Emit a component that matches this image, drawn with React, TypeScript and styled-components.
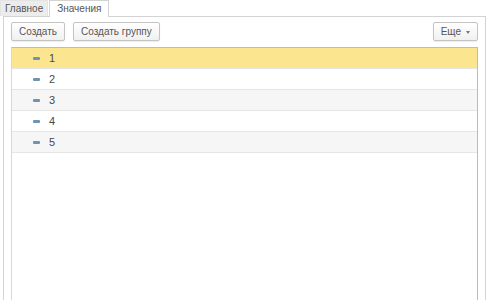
import styled, { createGlobalStyle } from 'styled-components'

const GlobalStyle = createGlobalStyle`
   html, body {
      margin: 0;
      padding: 0;
      background: #fff;
      font-family: 'Liberation Sans', Arial, sans-serif;
      font-size: 10px;
      color: #555;
   }
`

const Page = styled.div`
   width: 500px;
   height: 300px;
   display: flex;
   flex-direction: column;
   overflow: hidden;
`

const Tabs = styled.div`
   display: flex;
   height: 16px;
`

const Tab = styled.div<{ $active?: boolean }>`
   height: ${(p) => (p.$active ? '17px' : '16px')};
   padding: 0 ${(p) => (p.$active ? '7px' : '4px')};
   line-height: 16px;
   box-sizing: border-box;
   background: ${(p) => (p.$active ? '#fff' : '#ececec')};
   border: 1px solid ${(p) => (p.$active ? '#d3d3d3' : '#e4e4e4')};
   border-bottom: none;
   margin-left: ${(p) => (p.$active ? '1px' : '0')};
   position: relative;
   z-index: ${(p) => (p.$active ? 1 : 0)};
   color: #555;
`

const Panel = styled.div`
   flex: 1;
   margin: 0 14px 0 3px;
   border: 1px solid #d3d3d3;
   border-bottom: none;
   padding: 5px 7px 0 7px;
   display: flex;
   flex-direction: column;
   min-height: 0;
`

const Toolbar = styled.div`
   display: flex;
   gap: 8px;
   height: 19px;
`

const Spacer = styled.div`
   flex: 1;
`

const Button = styled.div`
   height: 19px;
   box-sizing: border-box;
   padding: 0 7px;
   border: 1px solid #c4c4c4;
   border-radius: 2px;
   background: linear-gradient(#ffffff, #f0f0f0);
   box-shadow: 0 1px 1px rgba(0, 0, 0, 0.08);
   color: #555;
   display: flex;
   align-items: center;
   gap: 5px;
`

const Caret = styled.span`
   width: 0;
   height: 0;
   border-left: 2px solid transparent;
   border-right: 2px solid transparent;
   border-top: 3px solid #777;
   margin-top: 1px;
`

const Table = styled.div`
   flex: 1;
   margin-top: 6px;
   border: 1px solid #bcbcbc;
   border-bottom: none;
   border-left-color: #d8d8d8;
`

const Row = styled.div<{ $selected?: boolean; $odd?: boolean }>`
   height: 21px;
   box-sizing: border-box;
   display: flex;
   align-items: center;
   padding-left: 21px;
   gap: 9px;
   border-bottom: 1px solid #e6e6e6;
   background: ${(p) => (p.$selected ? '#fbe58f' : p.$odd ? '#f6f6f6' : '#fff')};
   color: #4a4a4a;
   font-size: 11px;
`

const ItemIcon = styled.span`
   width: 7px;
   height: 3px;
   background: #6f93b5;
   border-radius: 1px;
`

const values = ['1', '2', '3', '4', '5']

const App = () => {
   return (
      <Page>
         <GlobalStyle />
         <Tabs>
            <Tab>Главное</Tab>
            <Tab $active>Значения</Tab>
         </Tabs>
         <Panel>
            <Toolbar>
               <Button>Создать</Button>
               <Button>Создать группу</Button>
               <Spacer />
               <Button>
                  Еще <Caret />
               </Button>
            </Toolbar>
            <Table>
               {values.map((v, i) => (
                  <Row key={v} $selected={i === 0} $odd={i % 2 === 0}>
                     <ItemIcon />
                     {v}
                  </Row>
               ))}
            </Table>
         </Panel>
      </Page>
   )
}

export default App
